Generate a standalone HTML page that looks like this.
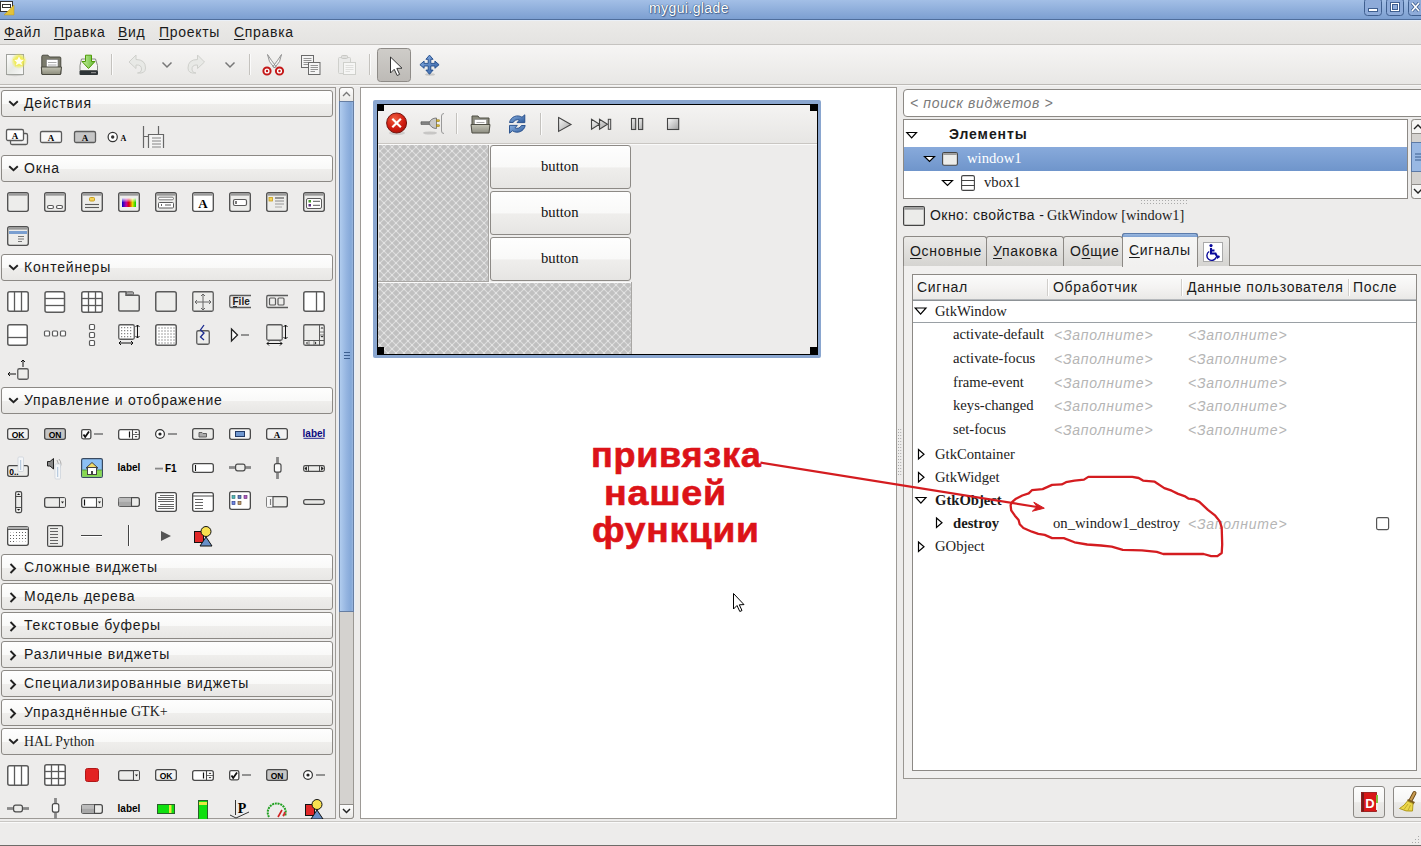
<!DOCTYPE html>
<html><head><meta charset="utf-8"><title>mygui.glade</title><style>
html,body{margin:0;padding:0;}
body{width:1421px;height:846px;overflow:hidden;position:relative;background:#edeceb;}
body>div,body>svg{position:absolute;}
.s,.sb,.si,.r,.rb,.title,.big{position:absolute;white-space:pre;color:#1a1a1a;}
.s{font-family:"Liberation Sans",sans-serif;font-size:14px;line-height:16px;letter-spacing:0.7px;}
.sb{font-family:"Liberation Sans",sans-serif;font-size:14px;line-height:16px;letter-spacing:0.9px;font-weight:bold;}
.si{font-family:"Liberation Sans",sans-serif;font-size:14px;line-height:16px;letter-spacing:0.8px;font-style:italic;color:#b5b5b5;}
.r{font-family:"Liberation Serif",serif;font-size:14.4px;line-height:16px;color:#222;}
.rb{font-family:"Liberation Serif",serif;font-size:14.4px;line-height:16px;font-weight:bold;}
.title{font-family:"Liberation Sans",sans-serif;font-size:14px;line-height:16px;letter-spacing:0.4px;color:#fff;text-shadow:0 0 1px #33507a,0 0 1px #33507a,1px 1px 1px #4a6a9a;}
.big{font-family:"Liberation Sans",sans-serif;font-size:35px;line-height:37px;font-weight:bold;color:#dc1318;letter-spacing:0.7px;-webkit-text-stroke:0.6px #dc1318;}
u{text-decoration:underline;text-underline-offset:2px;}
</style></head><body>
<div style="left:0px;top:0px;width:1421px;height:19px;background:linear-gradient(#a3bfe6,#7c9fd1)"></div>
<div style="left:0px;top:19px;width:1421px;height:1px;background:#4f6e9c"></div>
<svg style="left:0px;top:0px;" width="18" height="18" viewBox="0 0 18 18"><rect x="0.5" y="1.5" width="12" height="10" fill="#fff" stroke="#333" stroke-width="1"/><rect x="2.5" y="4.5" width="8" height="3" fill="none" stroke="#333"/><path d="M4 15 L14 5 L14 15 Z" fill="#e3c23a" stroke="#b89a20" stroke-width="0.5"/></svg>
<div class="title" style="left:649px;top:0px;">mygui.glade</div>
<svg style="left:1364px;top:-2px;" width="18" height="19" viewBox="0 0 18 19"><rect x="0.5" y="0.5" width="17" height="17" rx="3" fill="#8eabd9" stroke="#3f5f8f"/></svg>
<svg style="left:1386px;top:-2px;" width="18" height="19" viewBox="0 0 18 19"><rect x="0.5" y="0.5" width="17" height="17" rx="3" fill="#8eabd9" stroke="#3f5f8f"/></svg>
<svg style="left:1408px;top:-2px;" width="18" height="19" viewBox="0 0 18 19"><rect x="0.5" y="0.5" width="17" height="17" rx="3" fill="#8eabd9" stroke="#3f5f8f"/></svg>
<svg style="left:1368px;top:8px;" width="10" height="5" viewBox="0 0 10 5"><rect x="0.5" y="0.5" width="9" height="3" fill="#fff" stroke="#3f5f8f"/></svg>
<svg style="left:1390px;top:2px;" width="11" height="11" viewBox="0 0 11 11"><rect x="0.5" y="0.5" width="9" height="9" fill="#fff" stroke="#3f5f8f"/><rect x="2.5" y="2.5" width="5" height="5" fill="#8eabd9" stroke="#3f5f8f"/></svg>
<svg style="left:1411px;top:2px;" width="10" height="11" viewBox="0 0 10 11"><path d="M1 1 L8 9 M8 1 L1 9" stroke="#3f5f8f" stroke-width="3.2"/><path d="M1 1 L8 9 M8 1 L1 9" stroke="#fff" stroke-width="1.6"/></svg>
<div style="left:0px;top:20px;width:1421px;height:1px;background:#eaf0f8"></div>
<div style="left:0px;top:21px;width:1421px;height:23px;background:linear-gradient(#ebeae8,#e4e3e1)"></div>
<div style="left:0px;top:44px;width:1421px;height:1px;background:#c5c3c0"></div>
<div class="s" style="left:4px;top:24px;"><u>Ф</u>айл</div>
<div class="s" style="left:54px;top:24px;"><u>П</u>равка</div>
<div class="s" style="left:118px;top:24px;"><u>В</u>ид</div>
<div class="s" style="left:159px;top:24px;"><u>П</u>роекты</div>
<div class="s" style="left:234px;top:24px;"><u>С</u>правка</div>
<div style="left:0px;top:45px;width:1421px;height:39px;background:linear-gradient(#f6f5f4,#e8e7e5)"></div>
<div style="left:0px;top:84px;width:1421px;height:1px;background:#bdbab6"></div>
<div style="left:0px;top:85px;width:1421px;height:1px;background:#f6f6f5"></div>
<svg style="left:0;top:0" width="460" height="90" viewBox="0 0 460 90"><defs><radialGradient id="glow"><stop offset="0" stop-color="#ffff60" stop-opacity="1"/><stop offset=".55" stop-color="#f0f040" stop-opacity=".8"/><stop offset="1" stop-color="#f0f040" stop-opacity="0"/></radialGradient><linearGradient id="pgr" x1="0" x2="1" y1="0" y2="1"><stop offset="0" stop-color="#fff"/><stop offset=".5" stop-color="#e6e8e4"/><stop offset="1" stop-color="#fafafa"/></linearGradient><linearGradient id="fld" x1="0" x2="0" y1="0" y2="1"><stop offset="0" stop-color="#c4c4b4"/><stop offset="1" stop-color="#8c8c7c"/></linearGradient><linearGradient id="grn" x1="0" x2="1"><stop offset="0" stop-color="#c8f0a0"/><stop offset="1" stop-color="#60b830"/></linearGradient><linearGradient id="btp" x1="0" x2="0" y1="0" y2="1"><stop offset="0" stop-color="#cfcdc9"/><stop offset="1" stop-color="#bdbab6"/></linearGradient><linearGradient id="mvb" x1="0" x2="1" y1="0" y2="1"><stop offset="0" stop-color="#8fb4e6"/><stop offset="1" stop-color="#2a5aa0"/></linearGradient></defs><ellipse cx="15" cy="75" rx="8" ry="1.2" fill="#000" opacity=".12"/><rect x="6.5" y="54.5" width="17" height="20" fill="url(#pgr)" stroke="#a0a29d" stroke-width="1"/><circle cx="19" cy="61" r="8" fill="url(#glow)"/><path d="M19 55.5 L20.8 59.3 L24.8 59.6 L21.7 62.2 L22.7 66.2 L19 64 L15.3 66.2 L16.3 62.2 L13.2 59.6 L17.2 59.3 Z" fill="#fffff0" stroke="#f0e040" stroke-width=".6"/><path d="M41.8 74 V56.5 Q41.8 55.2 43 55.2 H48 L49.5 57 H59.8 Q60.8 57 60.8 58 V74 Z" fill="#7b7b6c" stroke="#4a4a40" stroke-width="1"/><rect x="46.5" y="59.5" width="11.5" height="9" fill="#fff" stroke="#777" stroke-width=".6"/><path d="M48 62.5 H56.5 M48 65 H56.5" stroke="#aaa" stroke-width="1"/><path d="M41.3 67 H61.5 L60.5 74.5 H42 Z" fill="url(#fld)" stroke="#4a4a40" stroke-width="1"/><path d="M80 65.5 L81.5 59 H95.5 L97.5 65.5 V70.5 H80 Z" fill="#f4f4f2" stroke="#888a85" stroke-width="1"/><rect x="79.5" y="70.5" width="18.5" height="4.5" rx="1" fill="#2e3436"/><rect x="91" y="72" width="5" height="1.2" fill="#888"/><path d="M85.5 55.2 H91.5 V61.5 H95 L88.5 68.5 L82 61.5 H85.5 Z" fill="url(#grn)" stroke="#4e9a06" stroke-width="1"/><path d="M111.5 54 V75" stroke="#c4c2be" stroke-width="1"/><path d="M112.5 54 V75" stroke="#fbfbfb" stroke-width="1"/><path d="M249.5 54 V75" stroke="#c4c2be" stroke-width="1"/><path d="M250.5 54 V75" stroke="#fbfbfb" stroke-width="1"/><path d="M369.5 54 V75" stroke="#c4c2be" stroke-width="1"/><path d="M370.5 54 V75" stroke="#fbfbfb" stroke-width="1"/><path d="M136 55 L129 62 L136 68.5 V65 Q142 64.5 141.5 70 Q141 73 137.5 73 Q145.5 74 145.5 68 Q145.5 59.5 136 59.5 Z" fill="#e8e9e6" stroke="#cfd0cc" stroke-width="1"/><path d="M197.5 55 L204.5 62 L197.5 68.5 V65 Q191.5 64.5 192 70 Q192.5 73 196 73 Q188 74 188 68 Q188 59.5 197.5 59.5 Z" fill="#e8e9e6" stroke="#cfd0cc" stroke-width="1"/><path d="M162.5 62.5 L167 67 L171.5 62.5" fill="none" stroke="#777" stroke-width="1.5"/><path d="M225.5 62.5 L230 67 L234.5 62.5" fill="none" stroke="#777" stroke-width="1.5"/><path d="M267.5 54.5 Q268 62 274.5 68 L276 66.5 Q271 60 267.5 54.5 Z M281.5 54.5 Q281 62 274.5 68 L273 66.5 Q278 60 281.5 54.5 Z" fill="#f6f6f6" stroke="#8a8a8a" stroke-width=".9"/><circle cx="267" cy="71" r="3.6" fill="#fff" stroke="#c41818" stroke-width="2"/><circle cx="279.5" cy="71" r="3.6" fill="#fff" stroke="#c41818" stroke-width="2"/><circle cx="267" cy="71" r="1.2" fill="#c41818"/><circle cx="279.5" cy="71" r="1.2" fill="#c41818"/><rect x="301.5" y="55.5" width="12" height="12" fill="#f4f4f4" stroke="#6a6a6a" stroke-width="1"/><path d="M303.5 58.5 H311.5 M303.5 60.5 H311.5 M303.5 62.5 H311.5 M303.5 64.5 H308.5" stroke="#888" stroke-width=".9"/><rect x="308.5" y="62.5" width="11.5" height="12" fill="#f4f4f4" stroke="#6a6a6a" stroke-width="1"/><path d="M310.5 65.5 H318 M310.5 67.5 H318 M310.5 69.5 H318 M310.5 71.5 H315" stroke="#888" stroke-width=".9"/><rect x="338.5" y="57.5" width="12" height="16" rx="1" fill="#ebebea" stroke="#cfd0cc" stroke-width="1"/><rect x="341.5" y="55.5" width="6" height="3" rx="1" fill="#e0e0de" stroke="#c8c8c4" stroke-width="1"/><rect x="343.5" y="62.5" width="12" height="12" fill="#f6f6f5" stroke="#cfd0cc" stroke-width="1"/><path d="M345.5 65.5 H353.5 M345.5 67.5 H353.5 M345.5 69.5 H353.5 M345.5 71.5 H350" stroke="#dcdcda" stroke-width=".9"/><rect x="377.5" y="48.5" width="33" height="33" rx="3" fill="url(#btp)" stroke="#8e8b87" stroke-width="1"/><path d="M390.5 57 V73 L394.2 69.3 L397.2 75.5 L399.6 74.4 L396.8 68.4 L402 68.2 Z" fill="#fff" stroke="#333" stroke-width="1"/><ellipse cx="430" cy="74.5" rx="5" ry="1.2" fill="#000" opacity=".15"/><path d="M428.2 63.4 L428.2 59.3 L425.9 59.3 L429.5 55.1 L433.1 59.3 L430.8 59.3 L430.8 63.4 L434.9 63.4 L434.9 61.1 L439.1 64.7 L434.9 68.3 L434.9 66.0 L430.8 66.0 L430.8 70.1 L433.1 70.1 L429.5 74.3 L425.9 70.1 L428.2 70.1 L428.2 66.0 L424.1 66.0 L424.1 68.3 L419.9 64.7 L424.1 61.1 L424.1 63.4 Z" fill="url(#mvb)" stroke="#1e4a8a" stroke-width=".9" stroke-linejoin="round"/></svg>
<div style="left:0px;top:87px;width:336px;height:732px;box-sizing:border-box;border:1px solid #9d9a96;border-left:none;background:#edeceb"></div>
<div style="left:1px;top:90px;width:332px;height:27px;box-sizing:border-box;border:1px solid #8c8985;border-radius:3px;background:linear-gradient(#fefefe,#f9f9f8 50%,#efeeec 52%,#e8e7e5)"></div>
<svg style="left:8px;top:100px;" width="11" height="7" viewBox="0 0 11 7"><path d="M1.2 1.2 L5.5 5.3 L9.8 1.2" fill="none" stroke="#222" stroke-width="1.9"/></svg>
<div class="s" style="left:24px;top:95px;letter-spacing:0.82px">Действия</div>
<div style="left:1px;top:155px;width:332px;height:27px;box-sizing:border-box;border:1px solid #8c8985;border-radius:3px;background:linear-gradient(#fefefe,#f9f9f8 50%,#efeeec 52%,#e8e7e5)"></div>
<svg style="left:8px;top:165px;" width="11" height="7" viewBox="0 0 11 7"><path d="M1.2 1.2 L5.5 5.3 L9.8 1.2" fill="none" stroke="#222" stroke-width="1.9"/></svg>
<div class="s" style="left:24px;top:160px;letter-spacing:0.82px">Окна</div>
<div style="left:1px;top:254px;width:332px;height:27px;box-sizing:border-box;border:1px solid #8c8985;border-radius:3px;background:linear-gradient(#fefefe,#f9f9f8 50%,#efeeec 52%,#e8e7e5)"></div>
<svg style="left:8px;top:264px;" width="11" height="7" viewBox="0 0 11 7"><path d="M1.2 1.2 L5.5 5.3 L9.8 1.2" fill="none" stroke="#222" stroke-width="1.9"/></svg>
<div class="s" style="left:24px;top:259px;letter-spacing:0.82px">Контейнеры</div>
<div style="left:1px;top:387px;width:332px;height:27px;box-sizing:border-box;border:1px solid #8c8985;border-radius:3px;background:linear-gradient(#fefefe,#f9f9f8 50%,#efeeec 52%,#e8e7e5)"></div>
<svg style="left:8px;top:397px;" width="11" height="7" viewBox="0 0 11 7"><path d="M1.2 1.2 L5.5 5.3 L9.8 1.2" fill="none" stroke="#222" stroke-width="1.9"/></svg>
<div class="s" style="left:24px;top:392px;letter-spacing:0.82px">Управление и отображение</div>
<div style="left:1px;top:554px;width:332px;height:27px;box-sizing:border-box;border:1px solid #8c8985;border-radius:3px;background:linear-gradient(#fefefe,#f9f9f8 50%,#efeeec 52%,#e8e7e5)"></div>
<svg style="left:9px;top:563px;" width="8" height="11" viewBox="0 0 8 11"><path d="M1.5 1 L6 5.5 L1.5 10" fill="none" stroke="#222" stroke-width="1.9"/></svg>
<div class="s" style="left:24px;top:559px;letter-spacing:0.82px">Сложные виджеты</div>
<div style="left:1px;top:583px;width:332px;height:27px;box-sizing:border-box;border:1px solid #8c8985;border-radius:3px;background:linear-gradient(#fefefe,#f9f9f8 50%,#efeeec 52%,#e8e7e5)"></div>
<svg style="left:9px;top:592px;" width="8" height="11" viewBox="0 0 8 11"><path d="M1.5 1 L6 5.5 L1.5 10" fill="none" stroke="#222" stroke-width="1.9"/></svg>
<div class="s" style="left:24px;top:588px;letter-spacing:0.82px">Модель дерева</div>
<div style="left:1px;top:612px;width:332px;height:27px;box-sizing:border-box;border:1px solid #8c8985;border-radius:3px;background:linear-gradient(#fefefe,#f9f9f8 50%,#efeeec 52%,#e8e7e5)"></div>
<svg style="left:9px;top:621px;" width="8" height="11" viewBox="0 0 8 11"><path d="M1.5 1 L6 5.5 L1.5 10" fill="none" stroke="#222" stroke-width="1.9"/></svg>
<div class="s" style="left:24px;top:617px;letter-spacing:0.82px">Текстовые буферы</div>
<div style="left:1px;top:641px;width:332px;height:27px;box-sizing:border-box;border:1px solid #8c8985;border-radius:3px;background:linear-gradient(#fefefe,#f9f9f8 50%,#efeeec 52%,#e8e7e5)"></div>
<svg style="left:9px;top:650px;" width="8" height="11" viewBox="0 0 8 11"><path d="M1.5 1 L6 5.5 L1.5 10" fill="none" stroke="#222" stroke-width="1.9"/></svg>
<div class="s" style="left:24px;top:646px;letter-spacing:0.82px">Различные виджеты</div>
<div style="left:1px;top:670px;width:332px;height:27px;box-sizing:border-box;border:1px solid #8c8985;border-radius:3px;background:linear-gradient(#fefefe,#f9f9f8 50%,#efeeec 52%,#e8e7e5)"></div>
<svg style="left:9px;top:679px;" width="8" height="11" viewBox="0 0 8 11"><path d="M1.5 1 L6 5.5 L1.5 10" fill="none" stroke="#222" stroke-width="1.9"/></svg>
<div class="s" style="left:24px;top:675px;letter-spacing:0.82px">Специализированные виджеты</div>
<div style="left:1px;top:699px;width:332px;height:27px;box-sizing:border-box;border:1px solid #8c8985;border-radius:3px;background:linear-gradient(#fefefe,#f9f9f8 50%,#efeeec 52%,#e8e7e5)"></div>
<svg style="left:9px;top:708px;" width="8" height="11" viewBox="0 0 8 11"><path d="M1.5 1 L6 5.5 L1.5 10" fill="none" stroke="#222" stroke-width="1.9"/></svg>
<div class="s" style="left:24px;top:704px;letter-spacing:0.82px">Упразднённые </div>
<div style="left:1px;top:728px;width:332px;height:27px;box-sizing:border-box;border:1px solid #8c8985;border-radius:3px;background:linear-gradient(#fefefe,#f9f9f8 50%,#efeeec 52%,#e8e7e5)"></div>
<svg style="left:8px;top:738px;" width="11" height="7" viewBox="0 0 11 7"><path d="M1.2 1.2 L5.5 5.3 L9.8 1.2" fill="none" stroke="#222" stroke-width="1.9"/></svg>
<div class="r" style="left:24px;top:734px;font-size:13.8px">HAL Python</div>
<div class="r" style="left:131px;top:704px;font-size:14px">GTK+</div>
<div style="left:339px;top:87px;width:15px;height:732px;box-sizing:border-box;border:1px solid #9a9792;border-radius:3px;background:#d4d2cf"></div>
<div style="left:339px;top:87px;width:15px;height:15px;box-sizing:border-box;border:1px solid #8f8c88;border-radius:3px 3px 0 0;background:linear-gradient(#fdfdfd,#e9e8e6)"></div>
<div style="left:339px;top:804px;width:15px;height:15px;box-sizing:border-box;border:1px solid #8f8c88;border-radius:0 0 3px 3px;background:linear-gradient(#fdfdfd,#e9e8e6)"></div>
<div style="left:338px;top:101px;width:1px;height:511px;background:#e6eefa"></div>
<div style="left:354px;top:101px;width:1px;height:511px;background:#e6eefa"></div>
<div style="left:339px;top:101px;width:15px;height:511px;box-sizing:border-box;border:1px solid #667ea2;background:linear-gradient(90deg,#b0ccee,#94b4e0 50%,#84a8d8 85%,#9ab6de)"></div>
<svg style="left:342px;top:91px;" width="9" height="6" viewBox="0 0 9 6"><path d="M1 5 L4.5 1.5 L8 5" fill="none" stroke="#777" stroke-width="1.3"/></svg>
<svg style="left:342px;top:808px;" width="9" height="6" viewBox="0 0 9 6"><path d="M1 1 L4.5 4.5 L8 1" fill="none" stroke="#222" stroke-width="1.5"/></svg>
<svg style="left:343px;top:351px;" width="8" height="9" viewBox="0 0 8 9"><path d="M1 1.5 H7 M1 4.5 H7 M1 7.5 H7" stroke="#3d5f90" stroke-width="1.2"/></svg>
<svg style="left:0;top:0" width="340" height="846" viewBox="0 0 340 846"><rect x="10.5" y="133.5" width="17" height="11" rx="1.5" fill="#f3f3f3" stroke="#5b5b5b" stroke-width="1.3"/><rect x="6.5" y="129.5" width="17" height="11" rx="1.5" fill="#fff" stroke="#5b5b5b" stroke-width="1.3"/><text x="15" y="139" font-family="Liberation Serif" font-weight="bold" font-size="9" text-anchor="middle" fill="#000">A</text><rect x="40.5" y="131.5" width="21" height="11" rx="1.5" fill="#f8f8f8" stroke="#5b5b5b" stroke-width="1.3"/><text x="51" y="141" font-family="Liberation Serif" font-weight="bold" font-size="9" text-anchor="middle" fill="#000">A</text><rect x="74.5" y="131.5" width="21" height="11" rx="1.5" fill="#c6c6c6" stroke="#5b5b5b" stroke-width="1.3"/><text x="85" y="141" font-family="Liberation Serif" font-weight="bold" font-size="9" text-anchor="middle" fill="#000">A</text><circle cx="112.7" cy="137" r="4.6" fill="#fff" stroke="#333" stroke-width="1.2"/><circle cx="112.7" cy="137" r="1.7" fill="#333"/><text x="123.5" y="141" font-family="Liberation Serif" font-weight="bold" font-size="8" text-anchor="middle" fill="#000">A</text><path d="M143.5 126 L143.5 148" stroke="#666" stroke-width="1.2" fill="none"/><path d="M158.5 126 L158.5 134" stroke="#666" stroke-width="1.2" fill="none"/><path d="M143 136.5 L148 136.5" stroke="#666" stroke-width="1" fill="none"/><path d="M148.5 148 V134.5 H163.5 V148" fill="#f4f4f4" stroke="#666" stroke-width="1.2"/><path d="M152 138 L161 138" stroke="#777" stroke-width="0.9" fill="none"/><path d="M152 141 L161 141" stroke="#777" stroke-width="0.9" fill="none"/><path d="M152 144 L161 144" stroke="#777" stroke-width="0.9" fill="none"/><path d="M152 147 L161 147" stroke="#777" stroke-width="0.9" fill="none"/><rect x="7.7" y="192.7" width="20.6" height="18.6" rx="2" fill="#ededeb" stroke="#505050" stroke-width="1.35"/><rect x="8.5" y="193.5" width="19" height="2.2" fill="#9a9a9a"/><rect x="44.7" y="192.7" width="20.6" height="18.6" rx="2" fill="#ededeb" stroke="#505050" stroke-width="1.35"/><rect x="45.5" y="193.5" width="19" height="2.2" fill="#9a9a9a"/><rect x="47.5" y="205.5" width="6" height="3" rx="1.5" fill="#fff" stroke="#5b5b5b" stroke-width="1.2"/><rect x="56.5" y="205.5" width="6" height="3" rx="1.5" fill="#fff" stroke="#5b5b5b" stroke-width="1.2"/><rect x="81.7" y="192.7" width="20.6" height="18.6" rx="2" fill="#ededeb" stroke="#505050" stroke-width="1.35"/><rect x="82.5" y="193.5" width="19" height="2.2" fill="#9a9a9a"/><rect x="89.5" y="197.5" width="5" height="3.5" rx="1" fill="#f5d45a" stroke="#c8a020" stroke-width="1"/><path d="M85 204.5 L99 204.5" stroke="#5b5b5b" stroke-width="1.1" fill="none"/><path d="M85 207.5 L99 207.5" stroke="#5b5b5b" stroke-width="1.1" fill="none"/><rect x="118.7" y="192.7" width="20.6" height="18.6" rx="2" fill="#ededeb" stroke="#505050" stroke-width="1.35"/><rect x="119.5" y="193.5" width="19" height="2.2" fill="#9a9a9a"/><defs><linearGradient id="rb" x1="0" x2="1"><stop offset="0" stop-color="#0000c8"/><stop offset=".3" stop-color="#c000a0"/><stop offset=".5" stop-color="#e00000"/><stop offset=".75" stop-color="#e0e000"/><stop offset="1" stop-color="#00d000"/></linearGradient><linearGradient id="rbw" x1="0" x2="0" y1="0" y2="1"><stop offset="0" stop-color="#fff" stop-opacity=".9"/><stop offset=".5" stop-color="#fff" stop-opacity="0"/></linearGradient></defs><rect x="122" y="198" width="14" height="9" fill="url(#rb)"/><rect x="122" y="198" width="14" height="9" fill="url(#rbw)"/><rect x="155.7" y="192.7" width="20.6" height="18.6" rx="2" fill="#ededeb" stroke="#505050" stroke-width="1.35"/><rect x="156.5" y="193.5" width="19" height="2.2" fill="#9a9a9a"/><rect x="158.5" y="197.2" width="15" height="2.6" rx="1.3" fill="#fff" stroke="#5b5b5b" stroke-width="0.8"/><rect x="158.5" y="202.5" width="15" height="5.5" rx="1" fill="#fff" stroke="#5b5b5b" stroke-width="1"/><path d="M161 205 L162 205" stroke="#333" stroke-width="1.6" fill="none"/><path d="M165 205 L171 205" stroke="#5b5b5b" stroke-width="1" fill="none"/><rect x="192.7" y="192.7" width="20.6" height="18.6" rx="2" fill="#fff" stroke="#505050" stroke-width="1.35"/><rect x="193.5" y="193.5" width="19" height="2.2" fill="#9a9a9a"/><text x="203" y="208" font-family="Liberation Serif" font-weight="bold" font-size="13" text-anchor="middle" fill="#000">A</text><rect x="229.7" y="192.7" width="20.6" height="18.6" rx="2" fill="#ededeb" stroke="#505050" stroke-width="1.35"/><rect x="230.5" y="193.5" width="19" height="2.2" fill="#9a9a9a"/><rect x="233.5" y="199.5" width="13" height="6" rx="1.5" fill="#fff" stroke="#5b5b5b" stroke-width="1.2"/><path d="M236 201 L236 204" stroke="#222" stroke-width="1.2" fill="none"/><rect x="266.7" y="192.7" width="20.6" height="18.6" rx="2" fill="#ededeb" stroke="#505050" stroke-width="1.35"/><rect x="267.5" y="193.5" width="19" height="2.2" fill="#9a9a9a"/><rect x="269" y="197.5" width="3.5" height="3.5" fill="#f3d35a" stroke="#c8a020" stroke-width=".8"/><path d="M275 198 L284 198" stroke="#5b5b5b" stroke-width="1.2" fill="none"/><path d="M275 201 L284 201" stroke="#888" stroke-width="1" fill="none"/><path d="M275 204 L284 204" stroke="#999" stroke-width="1" fill="none"/><path d="M275 207 L282 207" stroke="#aaa" stroke-width="1" fill="none"/><rect x="303.7" y="192.7" width="20.6" height="18.6" rx="2" fill="#ededeb" stroke="#505050" stroke-width="1.35"/><rect x="304.5" y="193.5" width="19" height="2.2" fill="#9a9a9a"/><rect x="306.5" y="198.5" width="15" height="10" rx="1.5" fill="#fff" stroke="#5b5b5b" stroke-width="1"/><rect x="308.5" y="200" width="2.5" height="2.5" fill="#4a9a30"/><rect x="308.5" y="204" width="2.5" height="2.5" fill="#603080"/><path d="M313 201.3 L320 201.3" stroke="#5b5b5b" stroke-width="1" fill="none"/><path d="M313 205.3 L320 205.3" stroke="#5b5b5b" stroke-width="1" fill="none"/><rect x="7.7" y="226.7" width="20.6" height="18.6" rx="2" fill="#ededeb" stroke="#505050" stroke-width="1.35"/><rect x="8.5" y="227.5" width="19" height="2.2" fill="#9a9a9a"/><rect x="9" y="231" width="18" height="3" fill="#7a9fd0"/><path d="M18 236.5 L24 236.5" stroke="#777" stroke-width="1" fill="none"/><path d="M18 239 L24 239" stroke="#777" stroke-width="1" fill="none"/><path d="M18 241.5 L22 241.5" stroke="#777" stroke-width="1" fill="none"/><rect x="7.75" y="291.75" width="20.5" height="19.5" rx="2" fill="#fff" stroke="#5b5b5b" stroke-width="1.5"/><path d="M14.5 292 L14.5 311" stroke="#5b5b5b" stroke-width="1.3" fill="none"/><path d="M21.5 292 L21.5 311" stroke="#5b5b5b" stroke-width="1.3" fill="none"/><rect x="45" y="291.75" width="19.5" height="20.5" rx="2" fill="#fff" stroke="#5b5b5b" stroke-width="1.5"/><path d="M45 298.5 L64 298.5" stroke="#5b5b5b" stroke-width="1.3" fill="none"/><path d="M45 305.5 L64 305.5" stroke="#5b5b5b" stroke-width="1.3" fill="none"/><rect x="81.75" y="291.75" width="20.5" height="20.5" rx="2" fill="#fff" stroke="#5b5b5b" stroke-width="1.5"/><path d="M88.5 292 L88.5 312" stroke="#5b5b5b" stroke-width="1.3" fill="none"/><path d="M95.5 292 L95.5 312" stroke="#5b5b5b" stroke-width="1.3" fill="none"/><path d="M82 298.5 L102 298.5" stroke="#5b5b5b" stroke-width="1.3" fill="none"/><path d="M82 305.5 L102 305.5" stroke="#5b5b5b" stroke-width="1.3" fill="none"/><path d="M118.75 293 Q118.75 291.75 120 291.75 H126 V295.25 H138 Q139.25 295.25 139.25 296.5 V309.5 Q139.25 311 138 311 H120 Q118.75 311 118.75 309.5 Z" fill="#ededeb" stroke="#5b5b5b" stroke-width="1.5"/><rect x="126.5" y="291.8" width="7" height="3" rx="1" fill="#aaa" stroke="#5b5b5b" stroke-width="1"/><rect x="155.75" y="291.75" width="20.5" height="19.5" rx="2" fill="#ededeb" stroke="#5b5b5b" stroke-width="1.5"/><rect x="192.75" y="291.75" width="20.5" height="19.5" rx="1.5" fill="#ededeb" stroke="#5b5b5b" stroke-width="1.3"/><path d="M195 302 L211 302" stroke="#666" stroke-width="1" fill="none"/><path d="M203 294 L203 310" stroke="#666" stroke-width="1" fill="none"/><path d="M197 300 L195 302 L197 304 M209 300 L211 302 L209 304 M201 296 L203 294 L205 296 M201 308 L203 310 L205 308" fill="none" stroke="#666" stroke-width="1"/><path d="M251 295.5 H231 Q229.75 295.5 229.75 297 V306 Q229.75 307.5 231 307.5 H251" fill="none" stroke="#5b5b5b" stroke-width="1.3"/><text x="232.5" y="305" font-family="Liberation Sans" font-weight="bold" font-size="10" fill="#222">File</text><path d="M233 306.5 L237 306.5" stroke="#222" stroke-width="0.9" fill="none"/><path d="M288 295.5 H268 Q266.75 295.5 266.75 297 V306 Q266.75 307.5 268 307.5 H288" fill="none" stroke="#5b5b5b" stroke-width="1.3"/><rect x="269.5" y="298" width="6" height="7" rx="1" fill="#ededeb" stroke="#5b5b5b" stroke-width="1.2"/><rect x="278" y="298" width="6" height="7" rx="1" fill="#ededeb" stroke="#5b5b5b" stroke-width="1.2"/><rect x="303.75" y="291.75" width="20.5" height="19.5" rx="2" fill="#fff" stroke="#5b5b5b" stroke-width="1.5"/><path d="M316.5 292 L316.5 311" stroke="#5b5b5b" stroke-width="1.3" fill="none"/><rect x="7.75" y="324.75" width="19.5" height="20.5" rx="2" fill="#fff" stroke="#5b5b5b" stroke-width="1.5"/><path d="M8 337.5 L27 337.5" stroke="#5b5b5b" stroke-width="1.3" fill="none"/><rect x="44.5" y="331" width="5" height="5" rx="1" fill="#fff" stroke="#5b5b5b" stroke-width="1.2"/><rect x="52.5" y="331" width="5" height="5" rx="1" fill="#fff" stroke="#5b5b5b" stroke-width="1.2"/><rect x="60.5" y="331" width="5" height="5" rx="1" fill="#fff" stroke="#5b5b5b" stroke-width="1.2"/><rect x="89.5" y="324.5" width="5" height="5" rx="1" fill="#fff" stroke="#5b5b5b" stroke-width="1.2"/><rect x="89.5" y="332.5" width="5" height="5" rx="1" fill="#fff" stroke="#5b5b5b" stroke-width="1.2"/><rect x="89.5" y="340.5" width="5" height="5" rx="1" fill="#fff" stroke="#5b5b5b" stroke-width="1.2"/><rect x="118.75" y="324.75" width="15.5" height="14.5" rx="1.5" fill="#fff" stroke="#5b5b5b" stroke-width="1.3"/><rect x="121.2" y="327.2" width="1" height="1" fill="#444"/><rect x="121.2" y="330.2" width="1" height="1" fill="#444"/><rect x="121.2" y="333.2" width="1" height="1" fill="#444"/><rect x="121.2" y="336.2" width="1" height="1" fill="#444"/><rect x="124.2" y="327.2" width="1" height="1" fill="#444"/><rect x="124.2" y="330.2" width="1" height="1" fill="#444"/><rect x="124.2" y="333.2" width="1" height="1" fill="#444"/><rect x="124.2" y="336.2" width="1" height="1" fill="#444"/><rect x="127.2" y="327.2" width="1" height="1" fill="#444"/><rect x="127.2" y="330.2" width="1" height="1" fill="#444"/><rect x="127.2" y="333.2" width="1" height="1" fill="#444"/><rect x="127.2" y="336.2" width="1" height="1" fill="#444"/><rect x="130.2" y="327.2" width="1" height="1" fill="#444"/><rect x="130.2" y="330.2" width="1" height="1" fill="#444"/><rect x="130.2" y="333.2" width="1" height="1" fill="#444"/><rect x="130.2" y="336.2" width="1" height="1" fill="#444"/><path d="M137.5 325 V338 M135.5 327 L137.5 325 L139.5 327 M135.5 336 L137.5 338 L139.5 336" fill="none" stroke="#111" stroke-width="1"/><path d="M119 343 H133 M121 341 L119 343 L121 345 M131 341 L133 343 L131 345" fill="none" stroke="#111" stroke-width="1"/><rect x="155.75" y="324.75" width="20.5" height="20.5" rx="2" fill="#fff" stroke="#5b5b5b" stroke-width="1.5"/><rect x="158.5" y="327.5" width="1" height="1" fill="#444"/><rect x="158.5" y="330.5" width="1" height="1" fill="#444"/><rect x="158.5" y="333.5" width="1" height="1" fill="#444"/><rect x="158.5" y="336.5" width="1" height="1" fill="#444"/><rect x="158.5" y="339.5" width="1" height="1" fill="#444"/><rect x="158.5" y="342.5" width="1" height="1" fill="#444"/><rect x="161.5" y="327.5" width="1" height="1" fill="#444"/><rect x="161.5" y="330.5" width="1" height="1" fill="#444"/><rect x="161.5" y="333.5" width="1" height="1" fill="#444"/><rect x="161.5" y="336.5" width="1" height="1" fill="#444"/><rect x="161.5" y="339.5" width="1" height="1" fill="#444"/><rect x="161.5" y="342.5" width="1" height="1" fill="#444"/><rect x="164.5" y="327.5" width="1" height="1" fill="#444"/><rect x="164.5" y="330.5" width="1" height="1" fill="#444"/><rect x="164.5" y="333.5" width="1" height="1" fill="#444"/><rect x="164.5" y="336.5" width="1" height="1" fill="#444"/><rect x="164.5" y="339.5" width="1" height="1" fill="#444"/><rect x="164.5" y="342.5" width="1" height="1" fill="#444"/><rect x="167.5" y="327.5" width="1" height="1" fill="#444"/><rect x="167.5" y="330.5" width="1" height="1" fill="#444"/><rect x="167.5" y="333.5" width="1" height="1" fill="#444"/><rect x="167.5" y="336.5" width="1" height="1" fill="#444"/><rect x="167.5" y="339.5" width="1" height="1" fill="#444"/><rect x="167.5" y="342.5" width="1" height="1" fill="#444"/><rect x="170.5" y="327.5" width="1" height="1" fill="#444"/><rect x="170.5" y="330.5" width="1" height="1" fill="#444"/><rect x="170.5" y="333.5" width="1" height="1" fill="#444"/><rect x="170.5" y="336.5" width="1" height="1" fill="#444"/><rect x="170.5" y="339.5" width="1" height="1" fill="#444"/><rect x="170.5" y="342.5" width="1" height="1" fill="#444"/><rect x="173.5" y="327.5" width="1" height="1" fill="#444"/><rect x="173.5" y="330.5" width="1" height="1" fill="#444"/><rect x="173.5" y="333.5" width="1" height="1" fill="#444"/><rect x="173.5" y="336.5" width="1" height="1" fill="#444"/><rect x="173.5" y="339.5" width="1" height="1" fill="#444"/><rect x="173.5" y="342.5" width="1" height="1" fill="#444"/><rect x="196.75" y="330.75" width="12.5" height="13.5" rx="1.5" fill="#ededeb" stroke="#5b5b5b" stroke-width="1.3"/><path d="M204 325 L200.5 330 L204 333 L200.5 337 L204 340" fill="none" stroke="#1a2a90" stroke-width="1.3"/><path d="M231.5 329 L237.5 335 L231.5 341 Z" fill="#fff" stroke="#222" stroke-width="1.3"/><path d="M241 335 L249 335" stroke="#888" stroke-width="1.8" fill="none"/><rect x="266.75" y="324.75" width="15.5" height="15.5" rx="1.5" fill="#ededeb" stroke="#5b5b5b" stroke-width="1.3"/><path d="M285.5 325 V339 M283.5 327 L285.5 325 L287.5 327 M283.5 337 L285.5 339 L287.5 337" fill="none" stroke="#111" stroke-width="1"/><path d="M267 343.5 H282 M269 341.5 L267 343.5 L269 345.5 M280 341.5 L282 343.5 L280 345.5" fill="none" stroke="#111" stroke-width="1"/><rect x="303.75" y="324.75" width="20.5" height="20.5" rx="1.5" fill="#ededeb" stroke="#5b5b5b" stroke-width="1.3"/><path d="M319.5 325 L319.5 345" stroke="#5b5b5b" stroke-width="1" fill="none"/><path d="M304 340.5 L324 340.5" stroke="#5b5b5b" stroke-width="1" fill="none"/><path d="M320.5 328.5 L322 327 L323.5 328.5 Z M320.5 336 L322 337.5 L323.5 336 Z M307.5 341.5 L306 343 L307.5 344.5 Z M315 341.5 L316.5 343 L315 344.5 Z" fill="#222"/><path d="M319.5 332 L324 332" stroke="#5b5b5b" stroke-width="0.8" fill="none"/><path d="M319.5 335 L324 335" stroke="#5b5b5b" stroke-width="0.8" fill="none"/><path d="M309 340.5 L309 345" stroke="#5b5b5b" stroke-width="0.8" fill="none"/><path d="M314 340.5 L314 345" stroke="#5b5b5b" stroke-width="0.8" fill="none"/><rect x="17.75" y="368.75" width="10.5" height="10.5" rx="1.5" fill="#ededeb" stroke="#5b5b5b" stroke-width="1.3"/><path d="M23 367 V360 M21 362 L23 360 L25 362" fill="none" stroke="#111" stroke-width="1"/><path d="M16 374 H8 M10 372 L8 374 L10 376" fill="none" stroke="#111" stroke-width="1"/></svg>
<svg style="left:0;top:0" width="340" height="819" viewBox="0 0 340 819"><rect x="7.65" y="428.65" width="20.7" height="10.7" rx="2" fill="#f2f2f2" stroke="#4a4a4a" stroke-width="1.3"/><text x="18" y="437.6" font-family="Liberation Sans" font-weight="bold" font-size="8.5" text-anchor="middle" fill="#000">OK</text><rect x="44.65" y="428.65" width="20.7" height="10.7" rx="2" fill="#c6c6c6" stroke="#4a4a4a" stroke-width="1.3"/><text x="55" y="437.6" font-family="Liberation Sans" font-weight="bold" font-size="8.5" text-anchor="middle" fill="#000">ON</text><rect x="81.65" y="429.65" width="9.2" height="9.2" rx="1.5" fill="#fff" stroke="#4a4a4a" stroke-width="1.3"/><path d="M83.5 434.5 L85.2 437 L89 431.5" fill="none" stroke="#111" stroke-width="1.8"/><path d="M94 434 L103 434" stroke="#888" stroke-width="1.8" fill="none"/><rect x="118.65" y="429.65" width="20.7" height="9.7" rx="2" fill="#fff" stroke="#4a4a4a" stroke-width="1.3"/><path d="M132.5 429.5 L132.5 439.5" stroke="#4a4a4a" stroke-width="1.1" fill="none"/><path d="M129.5 431.5 L129.5 437.5" stroke="#111" stroke-width="1.2" fill="none"/><path d="M132.5 434.5 L139.5 434.5" stroke="#4a4a4a" stroke-width="0.8" fill="none"/><path d="M134.5 433 L136 431.5 L137.5 433 Z M134.5 436 L136 437.5 L137.5 436 Z" fill="#333"/><circle cx="160" cy="434" r="4.4" fill="#fff" stroke="#333" stroke-width="1.2"/><circle cx="160" cy="434" r="1.6" fill="#222"/><path d="M168 434 L177 434" stroke="#888" stroke-width="1.8" fill="none"/><rect x="192.65" y="428.65" width="20.7" height="10.7" rx="2" fill="#ececea" stroke="#4a4a4a" stroke-width="1.3"/><path d="M199 432.5 H202 L203 433.5 H206.5 V437 H199 Z" fill="#aaa" stroke="#555" stroke-width="0.9"/><rect x="229.65" y="428.65" width="20.7" height="10.7" rx="2" fill="#f5f5f5" stroke="#4a4a4a" stroke-width="1.3"/><rect x="235.5" y="431.5" width="9" height="5" fill="#7098d0" stroke="#223a66" stroke-width="1"/><rect x="266.65" y="428.65" width="20.7" height="10.7" rx="2" fill="#f2f2f2" stroke="#4a4a4a" stroke-width="1.3"/><text x="277" y="437.5" font-family="Liberation Serif" font-weight="bold" font-size="9" text-anchor="middle" fill="#000">A</text><text x="314" y="437" font-family="Liberation Sans" font-weight="bold" font-size="10" text-anchor="middle" fill="#0a0a80">label</text><path d="M303.5 438.3 L324.5 438.3" stroke="#0a0a80" stroke-width="0.9" fill="none"/><rect x="7.65" y="465.65" width="20.7" height="10.7" rx="2" fill="#ececea" stroke="#4a4a4a" stroke-width="1.3"/><text x="14" y="474.5" font-family="Liberation Sans" font-weight="bold" font-size="8.5" text-anchor="middle" fill="#000">0..</text><rect x="18" y="457" width="5.5" height="14.5" rx="1" fill="#f4f6f8" stroke="#c8d0d8" stroke-width=".7"/><path d="M20.7 460 L20.7 470" stroke="#aac0d8" stroke-width="1" fill="none"/><path d="M47.5 461.5 H50 L53.5 458.5 V469 L50 466 H47.5 Z" fill="#888" stroke="#222" stroke-width="1"/><path d="M57 460 Q60 464 57 468 M59 459 Q63 464 59 469" fill="none" stroke="#999" stroke-width=".8"/><rect x="55" y="464" width="5.5" height="15" rx="1" fill="#f4f6f8" stroke="#c8d0d8" stroke-width=".7"/><path d="M57.7 467 L57.7 477" stroke="#aac0d8" stroke-width="1" fill="none"/><rect x="81.6" y="458.6" width="20.8" height="18.8" rx="1.5" fill="#8cc0f4" stroke="#3a4a60" stroke-width="1.2"/><rect x="82.2" y="470" width="19.6" height="6.8" fill="#88d850"/><path d="M82.2 470 L101.8 470" stroke="#4a8a30" stroke-width="0.8" fill="none"/><path d="M86 468 L92 462.5 L98 468 Z" fill="#f0dc6a" stroke="#444" stroke-width="1"/><rect x="87.5" y="467.5" width="9" height="7" fill="#fff" stroke="#444" stroke-width="1"/><rect x="91" y="471" width="2" height="3.5" fill="#444"/><text x="129" y="471" font-family="Liberation Sans" font-weight="bold" font-size="10" text-anchor="middle" fill="#000">label</text><path d="M155 468.6 L163 468.6" stroke="#888" stroke-width="1.8" fill="none"/><text x="165" y="472" font-family="Liberation Sans" font-weight="bold" font-size="10" text-anchor="start" fill="#000">F1</text><rect x="192.65" y="463.65" width="20.7" height="8.7" rx="2" fill="#fff" stroke="#4a4a4a" stroke-width="1.3"/><path d="M195.5 465 L195.5 471" stroke="#111" stroke-width="1.1" fill="none"/><path d="M229 467.5 L251 467.5" stroke="#888" stroke-width="2.8" fill="none"/><rect x="235.6" y="464.2" width="9.4" height="6.6" rx="2" fill="#ececea" stroke="#4a4a4a" stroke-width="1.2"/><path d="M277.5 457 L277.5 479" stroke="#888" stroke-width="2.8" fill="none"/><rect x="274.4" y="463.6" width="6.6" height="8.6" rx="2" fill="#fafafa" stroke="#4a4a4a" stroke-width="1.2"/><rect x="303.65" y="465.65" width="20.7" height="5.7" rx="1.5" fill="#ececea" stroke="#4a4a4a" stroke-width="1.2"/><path d="M308.5 465.5 L308.5 471.5" stroke="#4a4a4a" stroke-width="1" fill="none"/><path d="M319.5 465.5 L319.5 471.5" stroke="#4a4a4a" stroke-width="1" fill="none"/><path d="M306.8 468.5 L305.3 468.5 M306.5 466.8 L304.8 468.5 L306.5 470.2 Z M321.5 466.8 L323.2 468.5 L321.5 470.2 Z" fill="#111" stroke="#111" stroke-width=".6"/><rect x="304" y="466" width="4" height="5" fill="#fff" opacity="0"/><rect x="15.6" y="491.6" width="6" height="21" rx="1.5" fill="#ececea" stroke="#4a4a4a" stroke-width="1.2"/><path d="M15.6 496.5 L21.6 496.5" stroke="#4a4a4a" stroke-width="1" fill="none"/><path d="M15.6 507.5 L21.6 507.5" stroke="#4a4a4a" stroke-width="1" fill="none"/><path d="M17 495 L18.6 493.2 L20.2 495 Z M17 509 L18.6 510.8 L20.2 509 Z" fill="#111"/><rect x="44.65" y="497.65" width="20.7" height="9.7" rx="2" fill="#ececea" stroke="#4a4a4a" stroke-width="1.3"/><path d="M59.5 497.5 L59.5 507.5" stroke="#4a4a4a" stroke-width="1.1" fill="none"/><rect x="60" y="498.2" width="5" height="8.6" fill="#ececea"/><path d="M61 501.5 L64 501.5 L62.5 503.5 Z" fill="#222"/><rect x="81.65" y="497.65" width="20.7" height="9.7" rx="2" fill="#fff" stroke="#4a4a4a" stroke-width="1.3"/><path d="M96.5 497.5 L96.5 507.5" stroke="#4a4a4a" stroke-width="1.1" fill="none"/><rect x="97" y="498.2" width="5" height="8.6" fill="#ececea"/><path d="M98 501.5 L101 501.5 L99.5 503.5 Z" fill="#222"/><path d="M84.5 499.5 L84.5 505.5" stroke="#111" stroke-width="1.2" fill="none"/><rect x="118.65" y="497.65" width="20.7" height="8.7" rx="2" fill="#ececea" stroke="#4a4a4a" stroke-width="1.3"/><rect x="118.8" y="497.8" width="12.2" height="8.4" fill="#a8a8a8"/><path d="M131.5 497.5 L131.5 506.5" stroke="#4a4a4a" stroke-width="1.1" fill="none"/><rect x="118.8" y="497.8" width="12.2" height="4" fill="#bcbcbc"/><rect x="155.65" y="492.65" width="20.7" height="18.7" rx="2" fill="#fff" stroke="#4a4a4a" stroke-width="1.3"/><path d="M160 495.5 L174 495.5" stroke="#555" stroke-width="0.9" fill="none"/><path d="M158 497.5 L174 497.5" stroke="#555" stroke-width="0.9" fill="none"/><path d="M158 499.5 L174 499.5" stroke="#555" stroke-width="0.9" fill="none"/><path d="M158 501.5 L174 501.5" stroke="#555" stroke-width="0.9" fill="none"/><path d="M160 504.5 L174 504.5" stroke="#555" stroke-width="0.9" fill="none"/><path d="M158 506.5 L174 506.5" stroke="#555" stroke-width="0.9" fill="none"/><path d="M158 508.5 L174 508.5" stroke="#555" stroke-width="0.9" fill="none"/><rect x="192.65" y="492.65" width="20.7" height="18.7" rx="2" fill="#fff" stroke="#4a4a4a" stroke-width="1.3"/><path d="M192.5 496 L213.5 496" stroke="#4a4a4a" stroke-width="1" fill="none"/><path d="M195 499.5 L203 499.5" stroke="#555" stroke-width="0.9" fill="none"/><path d="M195 502.5 L203 502.5" stroke="#555" stroke-width="0.9" fill="none"/><path d="M195 505.5 L203 505.5" stroke="#555" stroke-width="0.9" fill="none"/><path d="M195 508.5 L203 508.5" stroke="#555" stroke-width="0.9" fill="none"/><rect x="229.65" y="491.65" width="20.7" height="17.7" rx="2" fill="#fff" stroke="#4a4a4a" stroke-width="1.3"/><rect x="232" y="495.5" width="3" height="3" fill="#50b8b8" stroke="#2a7070" stroke-width=".6"/><rect x="238" y="495.5" width="3" height="3" fill="#6080c0" stroke="#203060" stroke-width=".6"/><rect x="244" y="495.5" width="3" height="3" fill="#b060c0" stroke="#602070" stroke-width=".6"/><rect x="232" y="501.5" width="3" height="3" fill="#7088e0" stroke="#203080" stroke-width=".6"/><rect x="238" y="501.5" width="3" height="3" fill="#c0a070" stroke="#604020" stroke-width=".6"/><rect x="266.65" y="496.65" width="20.7" height="10.299999999999999" rx="2" fill="#ececea" stroke="#4a4a4a" stroke-width="1.3"/><rect x="266.7" y="496.7" width="6" height="10.2" fill="#f8f8f8"/><path d="M273 496.5 L273 507" stroke="#4a4a4a" stroke-width="1.1" fill="none"/><circle cx="270.5" cy="500" r=".7" fill="#333"/><circle cx="270.5" cy="502" r=".7" fill="#333"/><circle cx="270.5" cy="504" r=".7" fill="#333"/><rect x="303.65" y="499.65" width="20.7" height="4.7" rx="2" fill="#e8e8e6" stroke="#4a4a4a" stroke-width="1.2"/><rect x="7.65" y="526.65" width="20.7" height="18.7" rx="2" fill="#fff" stroke="#4a4a4a" stroke-width="1.3"/><rect x="7.8" y="526.8" width="20.4" height="2.4" fill="#b0b0b0"/><path d="M7.5 529.5 L28.5 529.5" stroke="#4a4a4a" stroke-width="0.9" fill="none"/><circle cx="10.5" cy="532.5" r=".55" fill="#bbb"/><circle cx="10.5" cy="535.5" r=".55" fill="#444"/><circle cx="10.5" cy="538.5" r=".55" fill="#444"/><circle cx="10.5" cy="541.5" r=".55" fill="#444"/><circle cx="13.5" cy="532.5" r=".55" fill="#bbb"/><circle cx="13.5" cy="535.5" r=".55" fill="#444"/><circle cx="13.5" cy="538.5" r=".55" fill="#444"/><circle cx="13.5" cy="541.5" r=".55" fill="#444"/><circle cx="16.5" cy="532.5" r=".55" fill="#444"/><circle cx="16.5" cy="535.5" r=".55" fill="#444"/><circle cx="16.5" cy="538.5" r=".55" fill="#444"/><circle cx="16.5" cy="541.5" r=".55" fill="#bbb"/><circle cx="19.5" cy="532.5" r=".55" fill="#444"/><circle cx="19.5" cy="535.5" r=".55" fill="#444"/><circle cx="19.5" cy="538.5" r=".55" fill="#444"/><circle cx="19.5" cy="541.5" r=".55" fill="#bbb"/><circle cx="22.5" cy="532.5" r=".55" fill="#444"/><circle cx="22.5" cy="535.5" r=".55" fill="#444"/><circle cx="22.5" cy="538.5" r=".55" fill="#444"/><circle cx="22.5" cy="541.5" r=".55" fill="#bbb"/><circle cx="25.5" cy="532.5" r=".55" fill="#444"/><circle cx="25.5" cy="535.5" r=".55" fill="#444"/><circle cx="25.5" cy="538.5" r=".55" fill="#444"/><circle cx="25.5" cy="541.5" r=".55" fill="#bbb"/><rect x="47.6" y="525.6" width="15" height="20.8" rx="1.5" fill="#ececea" stroke="#4a4a4a" stroke-width="1.2"/><path d="M50 528.5 L58 528.5" stroke="#555" stroke-width="0.9" fill="none"/><path d="M50 531.5 L58 531.5" stroke="#555" stroke-width="0.9" fill="none"/><path d="M50 534.5 L58 534.5" stroke="#555" stroke-width="0.9" fill="none"/><path d="M50 537.5 L58 537.5" stroke="#555" stroke-width="0.9" fill="none"/><path d="M50 540.5 L58 540.5" stroke="#555" stroke-width="0.9" fill="none"/><path d="M50 543.5 L58 543.5" stroke="#555" stroke-width="0.9" fill="none"/><path d="M81 535.5 L102 535.5" stroke="#444" stroke-width="1" fill="none"/><path d="M81 536.5 L102 536.5" stroke="#fff" stroke-width="1" fill="none"/><path d="M128.5 525 L128.5 546" stroke="#444" stroke-width="1" fill="none"/><path d="M129.5 525 L129.5 546" stroke="#fff" stroke-width="1" fill="none"/><path d="M161 531 L171 536 L161 541 Z" fill="#555"/><rect x="194.5" y="531.5" width="9" height="11" fill="#e02828" stroke="#111" stroke-width="1"/><path d="M200 546 L206 537 L212 546 Z" fill="#6890c8" stroke="#111" stroke-width="1"/><circle cx="206" cy="531.5" r="5" fill="#f8e050" stroke="#111" stroke-width="1"/><rect x="7.75" y="765.75" width="20.5" height="19.5" rx="2" fill="#fff" stroke="#5b5b5b" stroke-width="1.5"/><path d="M14.5 766 L14.5 785" stroke="#5b5b5b" stroke-width="1.3" fill="none"/><path d="M21.5 766 L21.5 785" stroke="#5b5b5b" stroke-width="1.3" fill="none"/><rect x="44.75" y="764.75" width="20.5" height="20.5" rx="2" fill="#fff" stroke="#5b5b5b" stroke-width="1.5"/><path d="M51.5 765 L51.5 785" stroke="#5b5b5b" stroke-width="1.3" fill="none"/><path d="M58.5 765 L58.5 785" stroke="#5b5b5b" stroke-width="1.3" fill="none"/><path d="M45 771.5 L65 771.5" stroke="#5b5b5b" stroke-width="1.3" fill="none"/><path d="M45 778.5 L65 778.5" stroke="#5b5b5b" stroke-width="1.3" fill="none"/><rect x="85.5" y="768.5" width="13" height="13" rx="2" fill="#e32222" stroke="#b01818" stroke-width="1"/><rect x="118.65" y="770.65" width="20.7" height="9.7" rx="2" fill="#ececea" stroke="#4a4a4a" stroke-width="1.3"/><path d="M133.5 770.5 L133.5 780.5" stroke="#4a4a4a" stroke-width="1.1" fill="none"/><rect x="134" y="771.2" width="5" height="8.6" fill="#ececea"/><path d="M135 774.5 L138 774.5 L136.5 776.5 Z" fill="#222"/><rect x="155.65" y="769.65" width="20.7" height="10.7" rx="2" fill="#f2f2f2" stroke="#4a4a4a" stroke-width="1.3"/><text x="166" y="778.6" font-family="Liberation Sans" font-weight="bold" font-size="8.5" text-anchor="middle" fill="#000">OK</text><rect x="192.65" y="770.65" width="20.7" height="9.7" rx="2" fill="#fff" stroke="#4a4a4a" stroke-width="1.3"/><path d="M206.5 770.5 L206.5 780.5" stroke="#4a4a4a" stroke-width="1.1" fill="none"/><path d="M203.5 772.5 L203.5 778.5" stroke="#111" stroke-width="1.2" fill="none"/><path d="M206.5 775.5 L213.5 775.5" stroke="#4a4a4a" stroke-width="0.8" fill="none"/><path d="M208.5 774 L210 772.5 L211.5 774 Z M208.5 777 L210 778.5 L211.5 777 Z" fill="#333"/><rect x="229.65" y="770.65" width="9.2" height="9.2" rx="1.5" fill="#fff" stroke="#4a4a4a" stroke-width="1.3"/><path d="M231.5 775.5 L233.2 778 L237 772.5" fill="none" stroke="#111" stroke-width="1.8"/><path d="M242 775 L251 775" stroke="#888" stroke-width="1.8" fill="none"/><rect x="266.65" y="769.65" width="20.7" height="10.7" rx="2" fill="#c6c6c6" stroke="#4a4a4a" stroke-width="1.3"/><text x="277" y="778.6" font-family="Liberation Sans" font-weight="bold" font-size="8.5" text-anchor="middle" fill="#000">ON</text><circle cx="308" cy="775" r="4.4" fill="#fff" stroke="#333" stroke-width="1.2"/><circle cx="308" cy="775" r="1.6" fill="#222"/><path d="M316 775 L325 775" stroke="#888" stroke-width="1.8" fill="none"/><path d="M7 808.5 L29 808.5" stroke="#888" stroke-width="2.8" fill="none"/><rect x="13.6" y="805.2" width="8.8" height="6.6" rx="2" fill="#ececea" stroke="#4a4a4a" stroke-width="1.2"/><path d="M55.5 798 L55.5 819" stroke="#888" stroke-width="2.8" fill="none"/><rect x="52.4" y="803.6" width="6.4" height="8.6" rx="2" fill="#fafafa" stroke="#4a4a4a" stroke-width="1.2"/><rect x="81.65" y="804.65" width="20.7" height="8.7" rx="2" fill="#ececea" stroke="#4a4a4a" stroke-width="1.3"/><rect x="81.8" y="804.8" width="12.2" height="8.4" fill="#a8a8a8"/><path d="M94.5 804.5 L94.5 813.5" stroke="#4a4a4a" stroke-width="1.1" fill="none"/><rect x="81.8" y="804.8" width="12.2" height="4" fill="#bcbcbc"/><text x="129" y="812" font-family="Liberation Sans" font-weight="bold" font-size="10" text-anchor="middle" fill="#000">label</text><rect x="157.5" y="804.5" width="17" height="9" fill="#10e010" stroke="#2a602a" stroke-width="1"/><rect x="169" y="805" width="2.5" height="8" fill="#e8e840"/><rect x="198.5" y="800.5" width="9" height="20" fill="#10e010" stroke="#2a602a" stroke-width="1"/><rect x="199" y="802" width="8" height="3" fill="#e8e840"/><text x="242" y="813" font-family="Liberation Serif" font-weight="bold" font-size="14" text-anchor="middle" fill="#000">P</text><path d="M235.5 800 L235.5 815" stroke="#333" stroke-width="1" fill="none"/><path d="M230 815 L236 818 L249 812" fill="none" stroke="#333" stroke-width="1"/><path d="M269 817 A9 9 0 1 1 285 816" fill="none" stroke="#20a020" stroke-width="2" stroke-dasharray="2 .8"/><path d="M278 817 L282 810" stroke="#d02020" stroke-width="1.6"/><path d="M283 816 A9 9 0 0 0 285 812" fill="none" stroke="#d03030" stroke-width="2"/><rect x="305.5" y="804.5" width="9" height="11" fill="#e02828" stroke="#111" stroke-width="1"/><path d="M311 819 L317 810 L323 819 Z" fill="#6890c8" stroke="#111" stroke-width="1"/><circle cx="317" cy="804.5" r="5" fill="#f8e050" stroke="#111" stroke-width="1"/></svg>
<div style="left:360px;top:87px;width:537px;height:732px;box-sizing:border-box;border:1px solid #9d9a96;background:#fff"></div>
<div style="left:373px;top:100px;width:448px;height:258px;background:#8aa6cf;border-radius:2px"></div>
<div style="left:377px;top:104px;width:441px;height:251px;background:#000"></div>
<div style="left:378px;top:105px;width:439px;height:249px;background:#edeceb"></div>
<div style="left:378px;top:105px;width:439px;height:38px;background:linear-gradient(#f4f3f2,#e7e6e4)"></div>
<div style="left:378px;top:143px;width:439px;height:1px;background:#c9c6c2"></div>
<div style="left:378px;top:144px;width:439px;height:1px;background:#fafafa"></div>
<svg style="left:378px;top:145px" width="254" height="209" viewBox="0 0 254 209"><defs><pattern id="chk" width="8" height="8" patternUnits="userSpaceOnUse" x="-2" y="2"><rect width="8" height="8" fill="#c0c0c0"/><path d="M0 0 L8 8 M8 0 L0 8" stroke="#dcdcdc" stroke-width="1.15"/><rect x="-1" y="-1" width="2" height="2" fill="#e2e2e2"/><rect x="7" y="-1" width="2" height="2" fill="#e2e2e2"/><rect x="-1" y="7" width="2" height="2" fill="#e2e2e2"/><rect x="7" y="7" width="2" height="2" fill="#e2e2e2"/><rect x="3" y="3" width="2" height="2" fill="#e2e2e2"/></pattern><pattern id="chk2" width="8" height="8" patternUnits="userSpaceOnUse" x="-2" y="4"><rect width="8" height="8" fill="#c0c0c0"/><path d="M0 0 L8 8 M8 0 L0 8" stroke="#dcdcdc" stroke-width="1.15"/><rect x="-1" y="-1" width="2" height="2" fill="#e2e2e2"/><rect x="7" y="-1" width="2" height="2" fill="#e2e2e2"/><rect x="-1" y="7" width="2" height="2" fill="#e2e2e2"/><rect x="7" y="7" width="2" height="2" fill="#e2e2e2"/><rect x="3" y="3" width="2" height="2" fill="#e2e2e2"/></pattern></defs><rect x="0" y="0" width="111" height="137" fill="url(#chk)"/><rect x="0" y="137" width="254" height="72" fill="url(#chk2)"/><rect x="110" y="0" width="1" height="137" fill="#a9a7a4"/><rect x="0" y="136" width="111" height="1" fill="#a9a7a4"/><rect x="111" y="0" width="1" height="137" fill="#f4f4f3"/><rect x="0" y="137" width="254" height="1" fill="#fbfbfb"/><rect x="253" y="137" width="1" height="72" fill="#a9a7a4"/><rect x="0" y="0" width="1" height="136" fill="#e4e4e4"/></svg>
<div style="left:490px;top:145px;width:141px;height:44px;box-sizing:border-box;border:1px solid #8d8a86;border-radius:3px;background:linear-gradient(#fefefe,#f9f9f8 50%,#efeeec 52%,#e6e5e3)"></div>
<div class="r" style="left:541px;top:158px;font-size:14.67px;color:#111">button</div>
<div style="left:490px;top:191px;width:141px;height:44px;box-sizing:border-box;border:1px solid #8d8a86;border-radius:3px;background:linear-gradient(#fefefe,#f9f9f8 50%,#efeeec 52%,#e6e5e3)"></div>
<div class="r" style="left:541px;top:204px;font-size:14.67px;color:#111">button</div>
<div style="left:490px;top:237px;width:141px;height:44px;box-sizing:border-box;border:1px solid #8d8a86;border-radius:3px;background:linear-gradient(#fefefe,#f9f9f8 50%,#efeeec 52%,#e6e5e3)"></div>
<div class="r" style="left:541px;top:250px;font-size:14.67px;color:#111">button</div>
<div style="left:377px;top:104px;width:7px;height:7px;background:#000"></div>
<div style="left:810px;top:104px;width:7px;height:7px;background:#000"></div>
<div style="left:377px;top:347px;width:7px;height:7px;background:#000"></div>
<div style="left:810px;top:347px;width:7px;height:7px;background:#000"></div>
<svg style="left:0;top:0" width="900" height="400" viewBox="0 0 900 400"><defs><radialGradient id="rc" cx=".4" cy=".3" r=".8"><stop offset="0" stop-color="#f06040"/><stop offset=".6" stop-color="#d01c10"/><stop offset="1" stop-color="#a01008"/></radialGradient><linearGradient id="fg" x1="0" x2="0" y1="0" y2="1"><stop offset="0" stop-color="#c4c4b6"/><stop offset="1" stop-color="#8e8e82"/></linearGradient><linearGradient id="pg" x1="0" x2="0" y1="0" y2="1"><stop offset="0" stop-color="#fff"/><stop offset="1" stop-color="#b8b8b8"/></linearGradient><linearGradient id="bl" x1="0" x2="1" y1="0" y2="1"><stop offset="0" stop-color="#8ab0e0"/><stop offset="1" stop-color="#2d5a9a"/></linearGradient></defs><ellipse cx="397" cy="133" rx="8" ry="2" fill="#000" opacity=".12"/><circle cx="396.6" cy="123" r="10" fill="url(#rc)" stroke="#6a0a05" stroke-width=".9"/><path d="M392.3 118.7 L400.9 127.3 M400.9 118.7 L392.3 127.3" stroke="#fff" stroke-width="2.2"/><ellipse cx="430" cy="133" rx="7" ry="1.6" fill="#000" opacity=".15"/><path d="M421 121.8 H430 V124.4 H421 Z" fill="#888" stroke="#555" stroke-width=".7"/><path d="M429 123 Q431 118 436.5 118 V128.5 Q431 128.5 429 123 Z" fill="#c8c8c8" stroke="#666" stroke-width=".8"/><rect x="436.5" y="119.8" width="3" height="1.8" fill="#d8b830" stroke="#8a7010" stroke-width=".5"/><rect x="436.5" y="124.8" width="3" height="1.8" fill="#d8b830" stroke="#8a7010" stroke-width=".5"/><path d="M444 113.5 Q441.5 113.5 441.5 116 V131 Q441.5 133.5 444 133.5" fill="none" stroke="#999" stroke-width="1"/><path d="M456.5 113 V134" stroke="#c4c2be" stroke-width="1"/><path d="M457.5 113 V134" stroke="#fbfbfb" stroke-width="1"/><g transform="translate(470.5,114.5) scale(1.0)"><path d="M1.5 1.5 H7.5 L9 3.5 H18.5 V14 H1.5 Z" fill="#8a8a7c" stroke="#4e4e44" stroke-width="1"/><rect x="4" y="5" width="12" height="8" fill="#fff" stroke="#888" stroke-width=".6"/><path d="M6 8 H14 M6 10.5 H14" stroke="#aaa" stroke-width="1"/><path d="M0.5 10 H19.5 L18.5 18.5 H1.5 Z" fill="url(#fg)" stroke="#4e4e44" stroke-width="1"/></g><path d="M509.5 122.5 A8.2 8.2 0 0 1 522 117.2 L524.8 114.8 V122.6 H517 L519.4 120.2 A4.6 4.6 0 0 0 513.2 122.5 Z" fill="url(#bl)" stroke="#204a88" stroke-width=".9" stroke-linejoin="round"/><path d="M525.2 125.5 A8.2 8.2 0 0 1 512.5 130.8 L509.5 133.2 V125.4 H517.3 L515 127.8 A4.6 4.6 0 0 0 521.4 125.5 Z" fill="url(#bl)" stroke="#204a88" stroke-width=".9" stroke-linejoin="round"/><path d="M540.5 113 V135" stroke="#c4c2be" stroke-width="1"/><path d="M541.5 113 V135" stroke="#fbfbfb" stroke-width="1"/><defs><linearGradient id="mg" x1="0" x2="1" y1="0" y2="1"><stop offset="0" stop-color="#fafafa"/><stop offset="1" stop-color="#a0a0a0"/></linearGradient></defs><path d="M558.6 117.6 L571 124.5 L558.6 131.4 Z" fill="url(#mg)" stroke="#444" stroke-width="1.1"/><path d="M591.5 119.3 L599.5 124.3 L591.5 129.3 Z M599.5 119.3 L607.5 124.3 L599.5 129.3 Z" fill="url(#mg)" stroke="#444" stroke-width="1.1"/><rect x="608.3" y="119.3" width="2.4" height="10" fill="#ddd" stroke="#444" stroke-width="1"/><rect x="631.5" y="118.5" width="4.2" height="11" fill="url(#mg)" stroke="#444" stroke-width="1.1"/><rect x="638.5" y="118.5" width="4.2" height="11" fill="url(#mg)" stroke="#444" stroke-width="1.1"/><rect x="667.5" y="118.5" width="11.2" height="11" fill="url(#mg)" stroke="#444" stroke-width="1.1"/></svg>
<svg style="left:897px;top:428px" width="6" height="50" viewBox="0 0 6 50"><rect x="1.0" y="1" width="1" height="1" fill="#aaa"/><rect x="1.0" y="4" width="1" height="1" fill="#aaa"/><rect x="1.0" y="7" width="1" height="1" fill="#aaa"/><rect x="1.0" y="10" width="1" height="1" fill="#aaa"/><rect x="1.0" y="13" width="1" height="1" fill="#aaa"/><rect x="1.0" y="16" width="1" height="1" fill="#aaa"/><rect x="1.0" y="19" width="1" height="1" fill="#aaa"/><rect x="1.0" y="22" width="1" height="1" fill="#aaa"/><rect x="1.0" y="25" width="1" height="1" fill="#aaa"/><rect x="1.0" y="28" width="1" height="1" fill="#aaa"/><rect x="1.0" y="31" width="1" height="1" fill="#aaa"/><rect x="1.0" y="34" width="1" height="1" fill="#aaa"/><rect x="1.0" y="37" width="1" height="1" fill="#aaa"/><rect x="1.0" y="40" width="1" height="1" fill="#aaa"/><rect x="1.0" y="43" width="1" height="1" fill="#aaa"/><rect x="1.0" y="46" width="1" height="1" fill="#aaa"/><rect x="3.2" y="1" width="1" height="1" fill="#aaa"/><rect x="3.2" y="4" width="1" height="1" fill="#aaa"/><rect x="3.2" y="7" width="1" height="1" fill="#aaa"/><rect x="3.2" y="10" width="1" height="1" fill="#aaa"/><rect x="3.2" y="13" width="1" height="1" fill="#aaa"/><rect x="3.2" y="16" width="1" height="1" fill="#aaa"/><rect x="3.2" y="19" width="1" height="1" fill="#aaa"/><rect x="3.2" y="22" width="1" height="1" fill="#aaa"/><rect x="3.2" y="25" width="1" height="1" fill="#aaa"/><rect x="3.2" y="28" width="1" height="1" fill="#aaa"/><rect x="3.2" y="31" width="1" height="1" fill="#aaa"/><rect x="3.2" y="34" width="1" height="1" fill="#aaa"/><rect x="3.2" y="37" width="1" height="1" fill="#aaa"/><rect x="3.2" y="40" width="1" height="1" fill="#aaa"/><rect x="3.2" y="43" width="1" height="1" fill="#aaa"/><rect x="3.2" y="46" width="1" height="1" fill="#aaa"/></svg>
<div style="left:903px;top:89px;width:530px;height:28px;box-sizing:border-box;border:1px solid #8c8985;border-radius:4px;background:#fff"></div>
<div class="si" style="left:910px;top:95px;color:#7a7a7a;letter-spacing:0.65px">&lt; поиск виджетов &gt;</div>
<div style="left:903px;top:119px;width:505px;height:80px;box-sizing:border-box;border:1px solid #8c8985;background:#fff"></div>
<div style="left:904px;top:147px;width:503px;height:24px;background:linear-gradient(#88aadb,#6f95cb)"></div>
<div class="sb" style="left:949px;top:126px;">Элементы</div>
<div class="r" style="left:967px;top:149.5px;color:#fff;font-size:14.67px">window1</div>
<div class="r" style="left:984px;top:173.5px;font-size:14.67px">vbox1</div>
<svg style="left:0;top:0" width="1421" height="846" viewBox="0 0 1421 846"><path d="M906.8 132.5 L916.5 132.5 L911.65 137.8 Z" fill="#fff" stroke="#000" stroke-width="1.2" stroke-linejoin="miter"/><path d="M924.5 156.5 L934.5 156.5 L929.5 161.5 Z" fill="#fff" stroke="#000" stroke-width="1.2" stroke-linejoin="miter"/><path d="M942.5 180.5 L952.5 180.5 L947.5 185.5 Z" fill="#fff" stroke="#000" stroke-width="1.2" stroke-linejoin="miter"/><rect x="942.6" y="152.6" width="14.8" height="12.6" rx="1.5" fill="#ececea" stroke="#444" stroke-width="1.1"/><rect x="943.2" y="153.2" width="13.6" height="1.8" fill="#999"/><rect x="961.6" y="175.6" width="12.8" height="14.8" rx="1.5" fill="#fff" stroke="#444" stroke-width="1.1"/><path d="M961.6 180.5 H974.4 M961.6 185.5 H974.4" stroke="#444" stroke-width="1"/><rect x="1411.5" y="119.5" width="14" height="79" rx="3" fill="#d4d2cf" stroke="#9a9792"/><path d="M1411.5 133.5 V122.5 Q1411.5 119.5 1414.5 119.5 H1425 V133.5 Z" fill="#f6f6f5" stroke="#8f8c88"/><path d="M1411.5 184.5 V195.5 Q1411.5 198.5 1414.5 198.5 H1425 V184.5 Z" fill="#f6f6f5" stroke="#8f8c88"/><rect x="1411.5" y="142.5" width="14" height="29" fill="#99b8e3" stroke="#5d7aa6"/><path d="M1414 129 L1418 125 L1422 129" fill="none" stroke="#222" stroke-width="1.4"/><path d="M1414 189 L1418 193 L1422 189" fill="none" stroke="#222" stroke-width="1.4"/><path d="M1415 154 H1421 M1415 157 H1421 M1415 160 H1421" stroke="#3d5f90" stroke-width="1.1"/><rect x="1141" y="200" width="1" height="1" fill="#aaa"/><rect x="1141" y="203" width="1" height="1" fill="#aaa"/><rect x="1144" y="200" width="1" height="1" fill="#aaa"/><rect x="1144" y="203" width="1" height="1" fill="#aaa"/><rect x="1147" y="200" width="1" height="1" fill="#aaa"/><rect x="1147" y="203" width="1" height="1" fill="#aaa"/><rect x="1150" y="200" width="1" height="1" fill="#aaa"/><rect x="1150" y="203" width="1" height="1" fill="#aaa"/><rect x="1153" y="200" width="1" height="1" fill="#aaa"/><rect x="1153" y="203" width="1" height="1" fill="#aaa"/><rect x="1156" y="200" width="1" height="1" fill="#aaa"/><rect x="1156" y="203" width="1" height="1" fill="#aaa"/><rect x="1159" y="200" width="1" height="1" fill="#aaa"/><rect x="1159" y="203" width="1" height="1" fill="#aaa"/><rect x="1162" y="200" width="1" height="1" fill="#aaa"/><rect x="1162" y="203" width="1" height="1" fill="#aaa"/><rect x="1165" y="200" width="1" height="1" fill="#aaa"/><rect x="1165" y="203" width="1" height="1" fill="#aaa"/><rect x="1168" y="200" width="1" height="1" fill="#aaa"/><rect x="1168" y="203" width="1" height="1" fill="#aaa"/><rect x="1171" y="200" width="1" height="1" fill="#aaa"/><rect x="1171" y="203" width="1" height="1" fill="#aaa"/><rect x="1174" y="200" width="1" height="1" fill="#aaa"/><rect x="1174" y="203" width="1" height="1" fill="#aaa"/><rect x="1177" y="200" width="1" height="1" fill="#aaa"/><rect x="1177" y="203" width="1" height="1" fill="#aaa"/><rect x="1180" y="200" width="1" height="1" fill="#aaa"/><rect x="1180" y="203" width="1" height="1" fill="#aaa"/><rect x="1183" y="200" width="1" height="1" fill="#aaa"/><rect x="1183" y="203" width="1" height="1" fill="#aaa"/><rect x="1186" y="200" width="1" height="1" fill="#aaa"/><rect x="1186" y="203" width="1" height="1" fill="#aaa"/><rect x="903.6" y="206.6" width="20.8" height="18.8" rx="1.5" fill="#ececea" stroke="#444" stroke-width="1.2"/><rect x="904.3" y="207.3" width="19.4" height="2.4" fill="#999"/></svg>
<div class="s" style="left:930px;top:207px;letter-spacing:0.45px">Окно: свойства -</div>
<div class="r" style="left:1047px;top:207px;font-size:14.4px">GtkWindow [window1]</div>
<div style="left:903px;top:265px;width:530px;height:514px;box-sizing:border-box;border:1px solid #9a9792;border-right:none;background:#f1f0ef"></div>
<div style="left:903px;top:236px;width:84px;height:30px;box-sizing:border-box;border:1px solid #8c8985;border-bottom:none;border-radius:3px 3px 0 0;background:linear-gradient(#ebeae8,#d5d4d1)"></div>
<div class="s" style="left:910px;top:243px;"><u>О</u>сновные</div>
<div style="left:986px;top:236px;width:78px;height:30px;box-sizing:border-box;border:1px solid #8c8985;border-bottom:none;border-radius:3px 3px 0 0;background:linear-gradient(#ebeae8,#d5d4d1)"></div>
<div class="s" style="left:993px;top:243px;"><u>У</u>паковка</div>
<div style="left:1063px;top:236px;width:60px;height:30px;box-sizing:border-box;border:1px solid #8c8985;border-bottom:none;border-radius:3px 3px 0 0;background:linear-gradient(#ebeae8,#d5d4d1)"></div>
<div class="s" style="left:1070px;top:243px;">О<u>б</u>щие</div>
<div style="left:1197px;top:236px;width:33px;height:30px;box-sizing:border-box;border:1px solid #8c8985;border-bottom:none;border-radius:3px 3px 0 0;background:linear-gradient(#ebeae8,#d5d4d1)"></div>
<div style="left:1122px;top:233px;width:76px;height:34px;box-sizing:border-box;border:1px solid #8c8985;border-bottom:none;border-radius:3px 3px 0 0;background:linear-gradient(#f6f6f5,#f1f0ef)"></div>
<div style="left:1122px;top:233px;width:76px;height:4px;border-radius:3px 3px 0 0;background:linear-gradient(#9ab9e0,#7d9fd0);box-sizing:border-box;border:1px solid #5c7cac;border-bottom:none"></div>
<div class="s" style="left:1129px;top:242px;"><u>С</u>игналы</div>
<svg style="left:1203px;top:242px" width="20" height="20" viewBox="0 0 20 20"><rect x=".5" y=".5" width="19" height="19" fill="#fff" stroke="#aaa"/><circle cx="8" cy="3.6" r="1.6" fill="#0a0a9a"/><path d="M8 6 V11.5 H12.5 L14.5 15.5 L16.5 14.2 M8 8.5 H11.5" fill="none" stroke="#0a0a9a" stroke-width="2.1"/><path d="M6.2 9.5 A4.8 4.8 0 1 0 13.2 15.3" fill="none" stroke="#0a0a9a" stroke-width="1.4"/></svg>
<div style="left:912px;top:274px;width:505px;height:497px;box-sizing:border-box;border:1px solid #8c8985;background:#fff"></div>
<div style="left:913px;top:275px;width:503px;height:25px;background:linear-gradient(#fbfbfb,#f4f3f2 50%,#e9e8e6)"></div>
<div style="left:913px;top:299px;width:503px;height:1px;background:#b6b9bc"></div>
<div style="left:913px;top:300px;width:503px;height:1px;background:#8d9296"></div>
<div style="left:1047px;top:279px;width:1px;height:17px;background:#d0cecb"></div>
<div style="left:1048px;top:279px;width:1px;height:17px;background:#fff"></div>
<div style="left:1181px;top:279px;width:1px;height:17px;background:#d0cecb"></div>
<div style="left:1182px;top:279px;width:1px;height:17px;background:#fff"></div>
<div style="left:1348px;top:279px;width:1px;height:17px;background:#d0cecb"></div>
<div style="left:1349px;top:279px;width:1px;height:17px;background:#fff"></div>
<div class="s" style="left:917px;top:279px;">Сигнал</div>
<div class="s" style="left:1053px;top:279px;">Обработчик</div>
<div class="s" style="left:1187px;top:279px;">Данные пользователя</div>
<div class="s" style="left:1353px;top:279px;">После</div>
<div style="left:913px;top:322px;width:503px;height:1px;background:#9aa0a5"></div>
<svg style="left:0;top:0" width="1421" height="846" viewBox="0 0 1421 846"><path d="M915.2 308 L926 308 L920.6 314.2 Z" fill="#fff" stroke="#000" stroke-width="1.2" stroke-linejoin="miter"/><path d="M918.5 449.5 L924 454.25 L918.5 459 Z" fill="#fff" stroke="#000" stroke-width="1.2"/><path d="M918.5 472.5 L924 477.25 L918.5 482 Z" fill="#fff" stroke="#000" stroke-width="1.2"/><path d="M915.8 497.5 L926 497.5 L920.9 503.2 Z" fill="#fff" stroke="#000" stroke-width="1.2" stroke-linejoin="miter"/><path d="M936.5 518 L942 522.75 L936.5 527.5 Z" fill="#fff" stroke="#000" stroke-width="1.2"/><path d="M918.5 542 L924 546.75 L918.5 551.5 Z" fill="#fff" stroke="#000" stroke-width="1.2"/><rect x="1376.6" y="517.6" width="12" height="12" rx="1.5" fill="#fff" stroke="#555" stroke-width="1.2"/></svg>
<div class="r" style="left:935px;top:303px;font-size:14.67px">GtkWindow</div>
<div class="r" style="left:953px;top:326px;font-size:14.67px">activate-default</div>
<div class="si" style="left:1054px;top:327px;">&lt;Заполните&gt;</div>
<div class="si" style="left:1188px;top:327px;">&lt;Заполните&gt;</div>
<div class="r" style="left:953px;top:350px;font-size:14.67px">activate-focus</div>
<div class="si" style="left:1054px;top:351px;">&lt;Заполните&gt;</div>
<div class="si" style="left:1188px;top:351px;">&lt;Заполните&gt;</div>
<div class="r" style="left:953px;top:374px;font-size:14.67px">frame-event</div>
<div class="si" style="left:1054px;top:375px;">&lt;Заполните&gt;</div>
<div class="si" style="left:1188px;top:375px;">&lt;Заполните&gt;</div>
<div class="r" style="left:953px;top:397px;font-size:14.67px">keys-changed</div>
<div class="si" style="left:1054px;top:398px;">&lt;Заполните&gt;</div>
<div class="si" style="left:1188px;top:398px;">&lt;Заполните&gt;</div>
<div class="r" style="left:953px;top:421px;font-size:14.67px">set-focus</div>
<div class="si" style="left:1054px;top:422px;">&lt;Заполните&gt;</div>
<div class="si" style="left:1188px;top:422px;">&lt;Заполните&gt;</div>
<div class="r" style="left:935px;top:445.5px;font-size:14.67px">GtkContainer</div>
<div class="r" style="left:935px;top:469px;font-size:14.67px">GtkWidget</div>
<div class="rb" style="left:935px;top:491.5px;font-size:14.67px">GtkObject</div>
<div class="rb" style="left:953px;top:514.5px;font-size:14.67px">destroy</div>
<div class="r" style="left:1053px;top:514.5px;font-size:14.67px">on_window1_destroy</div>
<div class="si" style="left:1188px;top:515.5px;">&lt;Заполните&gt;</div>
<div class="r" style="left:935px;top:538px;font-size:14.67px">GObject</div>
<div style="left:1353px;top:786px;width:32px;height:32px;box-sizing:border-box;border:1px solid #8c8985;border-radius:3px;background:linear-gradient(#fdfdfd,#f5f5f4 50%,#ebeae8 52%,#e3e2e0)"></div>
<div style="left:1393px;top:786px;width:40px;height:32px;box-sizing:border-box;border:1px solid #8c8985;border-radius:3px;background:linear-gradient(#fdfdfd,#f5f5f4 50%,#ebeae8 52%,#e3e2e0)"></div>
<svg style="left:1360px;top:791px" width="20" height="22" viewBox="0 0 20 22"><rect x="1.5" y="1.5" width="15" height="19" fill="#d81818" stroke="#901010" stroke-width=".8"/><rect x="1.5" y="1.5" width="2.5" height="19" fill="#7a1a1a"/><rect x="16" y="4" width="2" height="8" fill="#80c040"/><rect x="16" y="12" width="2" height="7" fill="#f0f0f0"/><text x="10" y="16.5" font-family="Liberation Sans" font-weight="bold" font-size="13" text-anchor="middle" fill="#fff">D</text></svg>
<svg style="left:1396px;top:790px" width="25" height="24" viewBox="0 0 25 24"><path d="M18.5 3 L14.5 10.5" stroke="#6a4a18" stroke-width="4" stroke-linecap="round"/><path d="M18.5 3 L14.5 10.5" stroke="#c89a50" stroke-width="2.2" stroke-linecap="round"/><path d="M11.5 10 L17.5 12.5 L16.5 14" stroke="#7a5a20" stroke-width="2" fill="none"/><path d="M11.5 11 L17 13.5 L16.5 21 Q10 22 3.5 18.5 Q8.5 15.5 11.5 11 Z" fill="#ecd648" stroke="#a89218" stroke-width=".9"/><path d="M12 14 L8 19.5 M14.5 15 L12 20.5" stroke="#b8a228" stroke-width=".8"/></svg>
<div style="left:0px;top:821px;width:1421px;height:1px;background:#c9c7c4"></div>
<div style="left:0px;top:822px;width:1421px;height:1px;background:#fafafa"></div>
<div style="left:0px;top:845px;width:1421px;height:1px;background:#6e6c69"></div>
<svg style="left:1408px;top:832px" width="13" height="13" viewBox="0 0 13 13"><rect x="10" y="4" width="1" height="1" fill="#aaa"/><rect x="7" y="7" width="1" height="1" fill="#aaa"/><rect x="10" y="7" width="1" height="1" fill="#aaa"/><rect x="4" y="10" width="1" height="1" fill="#aaa"/><rect x="7" y="10" width="1" height="1" fill="#aaa"/><rect x="10" y="10" width="1" height="1" fill="#aaa"/></svg>
<div class="big" style="left:591px;top:436px;transform:scaleX(1.03);transform-origin:0 0">привязка</div>
<div class="big" style="left:603.5px;top:474px;transform:scaleX(1.075);transform-origin:0 0">нашей</div>
<div class="big" style="left:591.5px;top:511px;transform:scaleX(1.063);transform-origin:0 0">функции</div>
<svg style="left:0;top:0" width="1421" height="846" viewBox="0 0 1421 846"><path d="M1011.7 502.4 L1016 498.7 L1022.3 495.5 L1028.7 493.4 L1031.9 490.2 L1042.6 489.1 L1052.1 484.9 L1061.7 484.4 L1066 482.2 L1074.5 480.6 L1084 479.6 L1088.3 476.9 L1132.3 476.9 L1138.7 478 L1143 480.6 L1154.7 481.7 L1164.3 488.1 L1171.7 490.7 L1178.1 493.9 L1184.5 496.1 L1188.7 498.7 L1194 499.3 L1199.4 501.9 L1207.9 509.9 L1215.3 515.7 L1219.6 521.1 L1221.7 527.4 L1222.2 544.5 L1221.7 553 L1217.4 556.2 L1211.1 556.2 L1203.6 554 L1163.2 554 L1156.8 551.9 L1141.9 550.3 L1122.8 549.8 L1111.7 546.6 L1101 545.5 L1087.2 544.5 L1074.5 542.3 L1063.8 538.1 L1052.1 538.1 L1044.7 534.9 L1038.3 533.8 L1031.9 531.7 L1023.4 528 L1019.7 524.3 L1018.6 520 L1014.9 515.7 L1011.2 510.4 L1010.6 505.1 L1011.7 502.4" fill="none" stroke="#d41c20" stroke-width="2.3" stroke-linejoin="round"/><path d="M760.5 462.6 L1037 507" stroke="#d41c20" stroke-width="2.2"/><path d="M1044.3 508.2 L1033.8 502.2 L1037 506.8 L1032.4 511.2 Z" fill="#d41c20" stroke="#d41c20" stroke-width="1" stroke-linejoin="round"/></svg>
<svg style="left:733px;top:593px" width="14" height="20" viewBox="0 0 14 20"><path d="M0.5 0.5 V16 L4 12.5 L6.8 18.5 L9 17.5 L6.3 11.8 L11 11.6 Z" fill="#fff" stroke="#000" stroke-width="1"/></svg>
</body></html>
